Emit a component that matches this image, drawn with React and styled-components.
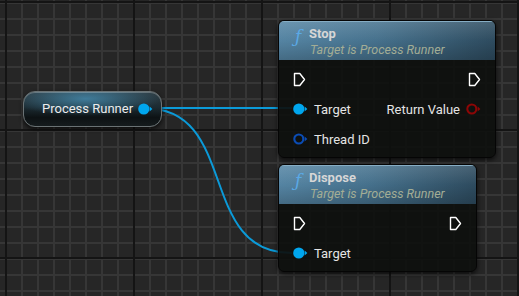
import React from "react";
import styled, { createGlobalStyle } from "styled-components";

const Global = createGlobalStyle`
  html, body { margin: 0; padding: 0; background: #262626; }
  #root { width: 519px; height: 296px; }
`;

const Canvas = styled.div`
  position: relative;
  width: 519px;
  height: 296px;
  overflow: hidden;
  font-family: Roboto, "Liberation Sans", sans-serif;
  background-color: #262626;
  background-image:
    linear-gradient(90deg, #141414 2px, transparent 2px),
    linear-gradient(180deg, #141414 2px, transparent 2px),
    linear-gradient(90deg, #363636 2px, transparent 2px),
    linear-gradient(180deg, #363636 2px, transparent 2px);
  background-size: 128px 128px, 128px 128px, 16px 16px, 16px 16px;
  background-position: 5px 0, 0 1px, 5px 0, 0 2px;
`;

const Wires = styled.svg`
  position: absolute;
  left: 0;
  top: 0;
  pointer-events: none;
`;

const Node = styled.div`
  position: absolute;
  box-sizing: border-box;
  border-radius: 6px;
  border: 1px solid #050505;
  background: rgba(14, 16, 14, 0.93);
  box-shadow: 0 2px 5px rgba(0, 0, 0, 0.7);
  overflow: hidden;
  display: flex;
  flex-direction: column;
`;

const Header = styled.div`
  height: 39px;
  box-sizing: border-box;
  padding: 4px 0 0 16px;
  display: flex;
  gap: 2px;
  background:
    linear-gradient(180deg, rgba(255, 255, 255, 0.12) 0%, rgba(0, 0, 0, 0.02) 50%, rgba(0, 0, 0, 0.2) 100%),
    linear-gradient(90deg, #5686a5 0%, #47738f 45%, #2e4c60 100%);
  border-top: 1px solid #86adc4;
`;

const FuncIcon = styled.span`
  font-family: "DejaVu Serif", serif;
  font-style: italic;
  font-size: 17px;
  line-height: 18px;
  color: #5aa9e6;
  width: 12px;
  padding-top: 1px;
`;

const Titles = styled.div`
  display: flex;
  flex-direction: column;
`;

const Title = styled.div`
  font-weight: bold;
  font-size: 13px;
  line-height: 16px;
  color: #d6d6d6;
`;

const Subtitle = styled.div`
  font-style: italic;
  font-size: 12.5px;
  line-height: 16px;
  color: #a3ad95;
  margin-left: 1px;
`;

const Body = styled.div`
  padding: 4px 14px 3px 14px;
  display: flex;
  flex-direction: column;
`;

const Row = styled.div`
  height: 30px;
  display: flex;
  align-items: center;
  justify-content: space-between;
`;

const Side = styled.div`
  display: flex;
  align-items: center;
  gap: 6px;
`;

const Label = styled.span`
  font-size: 13px;
  color: #e4e4e4;
`;

const Pill = styled.div`
  position: absolute;
  box-sizing: border-box;
  left: 23px;
  top: 91px;
  width: 139px;
  height: 36px;
  border-radius: 12px;
  border: 1px solid #6a7274;
  background:
    radial-gradient(ellipse 55% 50% at 45% 20%, rgba(80, 170, 215, 0.6), transparent 100%),
    linear-gradient(180deg, #2f3d44 0%, #1c2b32 45%, #0d1214 75%, #151b1d 100%);
  box-shadow: 0 2px 4px rgba(0, 0, 0, 0.7), inset 0 1px 0 rgba(255, 255, 255, 0.25);
  display: flex;
  align-items: center;
  padding: 0 0 0 18px;
  gap: 5px;
`;

const PillLabel = styled.span`
  font-size: 13px;
  color: #ececec;
  padding-bottom: 1px;
`;

const ExecPin = () => (
  <svg width="13" height="15" viewBox="0 0 13 15">
    <path d="M1.5 1.5 H6.8 L11.5 7.5 L6.8 13.5 H1.5 Z" fill="none" stroke="#ffffff" strokeWidth="1.4" strokeLinejoin="round" />
  </svg>
);

const DataPin = ({ color, filled }) => (
  <svg width="15" height="12" viewBox="0 0 15 12">
    {filled ? (
      <circle cx="5.8" cy="6" r="5.6" fill={color} />
    ) : (
      <circle cx="5.8" cy="6" r="4.5" fill="none" stroke={color} strokeWidth="2.1" />
    )}
    <path d="M11.6 3.5 L14.4 6 L11.6 8.5 Z" fill={color} />
  </svg>
);

const FunctionNode = ({ left, top, width, title, children }) => (
  <Node style={{ left, top, width }}>
    <Header>
      <FuncIcon>ƒ</FuncIcon>
      <Titles>
        <Title>{title}</Title>
        <Subtitle>Target is Process Runner</Subtitle>
      </Titles>
    </Header>
    <Body>{children}</Body>
  </Node>
);

const TARGET = "#00a6ee";

export default function App() {
  return (
    <>
      <Global />
      <Canvas>
        <Wires width="519" height="296">
          <path d="M144 108 L292 108" stroke="#0b9ad8" strokeWidth="2" fill="none" />
          <path d="M144 108 C 240 108, 196 253, 292 253" stroke="#0b9ad8" strokeWidth="2" fill="none" />
        </Wires>

        <Pill>
          <PillLabel>Process Runner</PillLabel>
          <DataPin color={TARGET} filled />
        </Pill>

        <FunctionNode left={278} top={20} width={218} title="Stop">
          <Row>
            <ExecPin />
            <ExecPin />
          </Row>
          <Row>
            <Side>
              <DataPin color={TARGET} filled />
              <Label>Target</Label>
            </Side>
            <Side>
              <Label>Return Value</Label>
              <DataPin color="#8c0606" />
            </Side>
          </Row>
          <Row>
            <Side>
              <DataPin color="#0b4cb4" />
              <Label>Thread ID</Label>
            </Side>
          </Row>
        </FunctionNode>

        <FunctionNode left={278} top={164} width={199} title="Dispose">
          <Row>
            <ExecPin />
            <ExecPin />
          </Row>
          <Row>
            <Side>
              <DataPin color={TARGET} filled />
              <Label>Target</Label>
            </Side>
          </Row>
        </FunctionNode>
      </Canvas>
    </>
  );
}
